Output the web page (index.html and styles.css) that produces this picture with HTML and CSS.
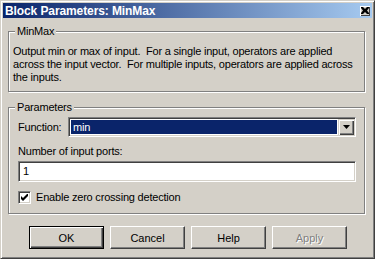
FILE: index.html
```html
<!DOCTYPE html>
<html lang="en">
<head>
    <meta charset="UTF-8">
    <title>Block Parameters: MinMax</title>
    <link rel="stylesheet" href="styles.css">
</head>
<body>
    <!-- Ventana del diálogo -->
    <div class="window">
        <div class="titlebar">
            <span class="title">Block Parameters: MinMax</span>
            <span class="close-btn">
                <svg width="8" height="7" viewBox="0 0 8 7">
                    <path d="M0 0h2l2 2 2-2h2v1L6 3.5 8 6v1H6L4 5 2 7H0V6l2-2.5L0 1z" fill="#000"/>
                </svg>
            </span>
        </div>

        <div class="content">
            <!-- Descripción del bloque -->
            <fieldset class="group desc">
                <legend>MinMax</legend>
                <p>Output min or max of input.&nbsp; For a single input, operators are applied<br>across the input vector.&nbsp; For multiple inputs, operators are applied across<br>the inputs.</p>
            </fieldset>

            <!-- Parámetros -->
            <fieldset class="group params">
                <legend>Parameters</legend>
                <div class="row">
                    <label class="row-label">Function:</label>
                    <div class="combo">
                        <span class="combo-value">min</span>
                        <span class="combo-btn">
                            <svg width="7" height="4" viewBox="0 0 7 4"><path d="M0 0h7L3.5 4z" fill="#000"/></svg>
                        </span>
                    </div>
                </div>
                <label class="field-label">Number of input ports:</label>
                <div class="edit">1</div>
                <label class="check">
                    <span class="checkbox">
                        <svg width="7" height="7" viewBox="0 0 7 7"><path d="M0 2v3l2 2 5-5V-1L2 4z" fill="#000"/></svg>
                    </span>
                    Enable zero crossing detection
                </label>
            </fieldset>

            <!-- Botones -->
            <div class="buttons">
                <button class="btn default">OK</button>
                <button class="btn">Cancel</button>
                <button class="btn">Help</button>
                <button class="btn" disabled>Apply</button>
            </div>
        </div>
    </div>
</body>
</html>
```

FILE: styles.css
```css
/* Estilos generales */
* {
    box-sizing: border-box;
}

body {
    margin: 0;
    font-family: "Liberation Sans", Arial, sans-serif;
    font-size: 11px;
    letter-spacing: -0.2px;
    color: #000;
    background-color: #d4d0c8;
}

/* Marco de la ventana */
.window {
    width: 375px;
    height: 259px;
    padding: 2px;
    background-color: #d4d0c8;
    border: 1px solid;
    border-color: #d4d0c8 #404040 #404040 #d4d0c8;
    box-shadow: inset 1px 1px #fff, inset -1px -1px #808080;
}

/* Barra de título */
.titlebar {
    height: 15px;
    display: flex;
    align-items: center;
    justify-content: space-between;
    padding: 0 2px;
    background: linear-gradient(to right, #0a246a, #a6caf0);
    color: #fff;
}

.title {
    font-weight: bold;
    font-size: 12px;
    letter-spacing: -0.1px;
}

.close-btn {
    width: 10px;
    height: 10px;
    display: flex;
    align-items: center;
    justify-content: center;
    background-color: #d4d0c8;
    box-shadow: inset 1px 1px #fff, inset -1px -1px #404040;
}

/* Contenido */
.content {
    padding: 7px 7px 0 5px;
}

.group {
    margin: 0;
    min-width: 0;
    border: 1px solid #808080;
    box-shadow: inset 1px 1px #fff, 1px 1px #fff;
}

.group legend {
    padding: 0 2px;
    line-height: 13px;
    background-color: #d4d0c8;
}

.desc {
    padding: 7px 4px 7px 4px;
}

.desc legend {
    margin-left: 2px;
}

.desc p {
    margin: 0;
    line-height: 13px;
    white-space: nowrap;
}

.params {
    margin-top: 9px;
    padding: 3px 8px 9px 9px;
}

.params legend {
    margin-left: -3px;
}

/* Fila de la función */
.row {
    display: flex;
    align-items: center;
}

.row-label {
    width: 50px;
}

/* Campos hundidos */
.combo,
.edit,
.checkbox {
    background-color: #fff;
    border: 1px solid;
    border-color: #808080 #fff #fff #808080;
    box-shadow: inset 1px 1px #404040, inset -1px -1px #d4d0c8;
}

.combo {
    flex: 1;
    height: 20px;
    display: flex;
    padding: 1px;
}

.combo-value {
    flex: 1;
    margin: 1px;
    padding-left: 2px;
    line-height: 14px;
    background-color: #0a246a;
    color: #fff;
}

.combo-btn {
    width: 16px;
    display: flex;
    align-items: center;
    justify-content: center;
    background-color: #d4d0c8;
    box-shadow: inset 1px 1px #d4d0c8, inset 2px 2px #fff, inset -1px -1px #404040, inset -2px -2px #808080;
}

.field-label {
    display: block;
    margin-top: 8px;
    line-height: 13px;
}

.edit {
    margin-top: 3px;
    height: 21px;
    padding-left: 4px;
    line-height: 19px;
}

/* Casilla de verificación */
.check {
    display: flex;
    align-items: center;
    gap: 5px;
    margin-top: 9px;
    line-height: 13px;
}

.checkbox {
    width: 13px;
    height: 13px;
    display: flex;
    align-items: center;
    justify-content: center;
}

/* Botones */
.buttons {
    display: flex;
    gap: 6px;
    margin-top: 12px;
    padding-left: 21px;
}

.btn {
    width: 75px;
    height: 23px;
    padding: 0;
    font: inherit;
    color: #000;
    background-color: #d4d0c8;
    border: 1px solid;
    border-color: #fff #404040 #404040 #fff;
    box-shadow: inset -1px -1px #808080;
}

.btn.default {
    border-color: #000;
    box-shadow: inset 1px 1px #fff, inset -1px -1px #404040, inset -2px -2px #808080;
}

.btn:disabled {
    color: #808080;
    text-shadow: 1px 1px #fff;
}
```
